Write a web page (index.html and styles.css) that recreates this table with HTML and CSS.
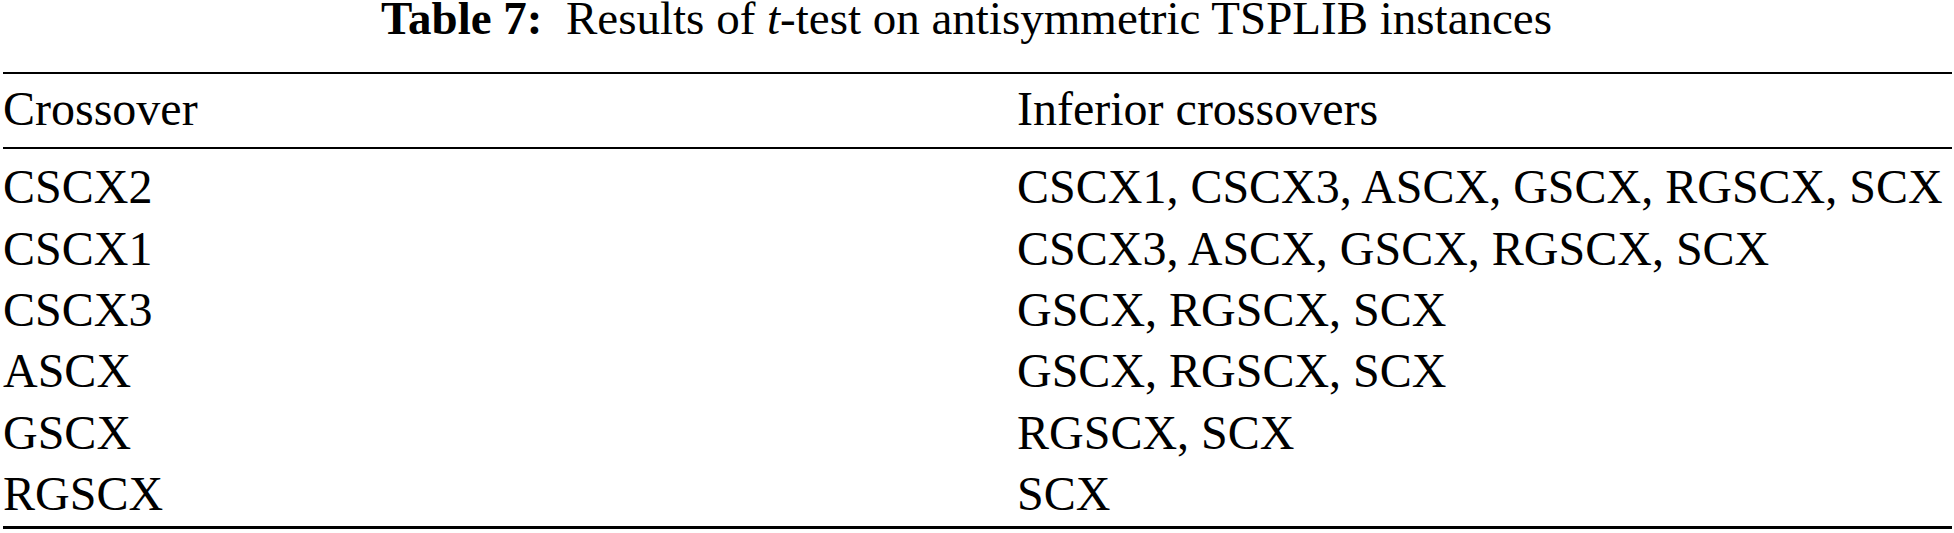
FILE: index.html
```html
<!DOCTYPE html>
<html lang="en">
<head>
    <meta charset="UTF-8">
    <meta name="viewport" content="width=device-width, initial-scale=1.0">
    <title>Table 7</title>
    <link rel="stylesheet" href="styles.css">
</head>
<body>
    <div class="page">
        <p class="caption"><b>Table 7:</b>&ensp;Results of <i>t</i>-test on antisymmetric TSPLIB instances</p>
        <table class="result">
            <thead>
                <tr>
                    <th class="first">Crossover</th>
                    <th>Inferior crossovers</th>
                </tr>
            </thead>
            <tbody>
                <tr>
                    <td class="first">CSCX2</td>
                    <td>CSCX1, CSCX3, ASCX, GSCX, RGSCX, SCX</td>
                </tr>
                <tr>
                    <td class="first">CSCX1</td>
                    <td>CSCX3, ASCX, GSCX, RGSCX, SCX</td>
                </tr>
                <tr>
                    <td class="first">CSCX3</td>
                    <td>GSCX, RGSCX, SCX</td>
                </tr>
                <tr>
                    <td class="first">ASCX</td>
                    <td>GSCX, RGSCX, SCX</td>
                </tr>
                <tr>
                    <td class="first">GSCX</td>
                    <td>RGSCX, SCX</td>
                </tr>
                <tr>
                    <td class="first">RGSCX</td>
                    <td>SCX</td>
                </tr>
            </tbody>
        </table>
    </div>
</body>
</html>
```

FILE: styles.css
```css
*{
    padding: 0;
    margin: 0;
    box-sizing: border-box;
}
body{
    background-color: #fff;
    color: #000;
    font-family: "Liberation Serif", "Times New Roman", serif;
}
.page{
    width: 1954px;
    padding: 0 2px 0 3px;
}
/* 标题 */
.caption{
    font-size: 47px;
    line-height: 36px;
    height: 36px;
    margin-bottom: 36px;
    text-align: center;
    padding-right: 22px;
    white-space: nowrap;
}
.result{
    width: 100%;
    border-collapse: collapse;
    font-size: 48px;
    border-top: 2px solid #000;
    border-bottom: 3px solid #000;
}
.result th,
.result td{
    font-weight: normal;
    text-align: left;
    line-height: 61.3px;
    white-space: nowrap;
    vertical-align: top;
}
.result thead tr{
    border-bottom: 2px solid #000;
}
.result th{
    padding-top: 4.1px;
    padding-bottom: 7.6px;
}
.result .first{
    width: 1014px;
}
.result tbody tr:first-child td{
    padding-top: 7.4px;
}
.result tbody tr:last-child td{
    padding-bottom: 1.8px;
}
```
